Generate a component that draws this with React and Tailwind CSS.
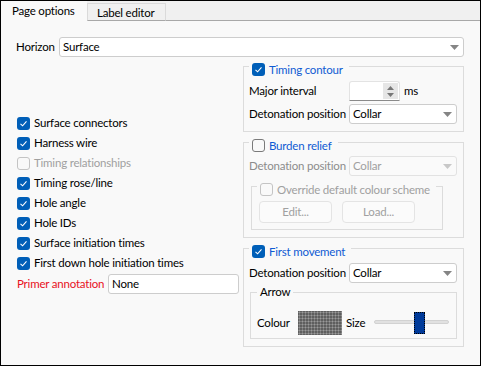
import React from "react";

function Check({ checked, disabled }) {
  if (checked) {
    return (
      <span className="w-[13px] h-[13px] shrink-0 rounded-[3px] bg-[#005fb8] flex items-center justify-center">
        <svg width="9" height="9" viewBox="0 0 9 9">
          <path d="M1.5 4.8 L3.6 6.8 L7.5 2.4" stroke="#ffffff" strokeWidth="1.1" fill="none" />
        </svg>
      </span>
    );
  }
  return (
    <span
      className={
        "w-[13px] h-[13px] shrink-0 rounded-[3px] border bg-[#f9f9f9] " +
        (disabled ? "border-[#c4c4c4]" : "border-[#7a7a7a]")
      }
    />
  );
}

function Tri({ disabled }) {
  return (
    <svg width="9" height="5" viewBox="0 0 9 5" className="shrink-0">
      <path d="M0 0 H9 L4.5 5 Z" fill={disabled ? "#c8c8c8" : "#858585"} />
    </svg>
  );
}

function Combo({ value, disabled, className }) {
  return (
    <div
      className={
        "h-[20px] rounded-[3px] border flex items-center justify-between pl-[3px] pr-[4px] " +
        (disabled
          ? "border-[#e2e2e2] bg-[#fafafa] text-[#a0a0a0] "
          : "border-[#cdcdcd] bg-white text-black ") +
        className
      }
    >
      <span>{value}</span>
      <Tri disabled={disabled} />
    </div>
  );
}

function CheckRow({ label, checked, disabled }) {
  return (
    <div className="h-[20px] flex items-center ml-[1px] gap-[4px]">
      <Check checked={checked} disabled={disabled} />
      <span className={disabled ? "text-[#a0a0a0]" : "text-black"}>{label}</span>
    </div>
  );
}

function Legend({ children, left }) {
  return (
    <div
      className={
        "absolute top-[-4px] h-[13px] flex items-center gap-[4px] pl-[3px] pr-[6px] bg-[#f9f9f9] " + left
      }
    >
      {children}
    </div>
  );
}

export default function App() {
  return (
    <div
      className="w-[481px] h-[366px] border border-black bg-[#f9f9f9] flex flex-col text-[11.5px] tracking-[-0.2px] leading-[16px] text-black overflow-hidden whitespace-nowrap"
      style={{ fontFamily: '"Segoe UI", Lato, "Noto Sans", sans-serif' }}
    >
      {/* tabs */}
      <div className="h-[20px] flex bg-[#f0f0f0] shrink-0">
        <div className="w-[86px] bg-[#f9f9f9] pl-[11px] pt-[2px]">Page options</div>
        <div className="mt-[2px] w-[79px] border border-[#dadada] border-b-[#a8a8a8] pl-[9px] pt-[1px]">
          Label editor
        </div>
        <div className="flex-1 border-b border-[#a8a8a8]" />
      </div>

      {/* panel */}
      <div className="flex-1 flex flex-col pl-[15px] pr-[16px]">
        <div className="mt-[16px] h-[20px] flex items-center">
          <span className="w-[43px] shrink-0">Horizon</span>
          <Combo value="Surface" className="flex-1" />
        </div>

        <div className="mt-[9px] flex">
          {/* left column */}
          <div className="w-[227px] shrink-0 pt-[47px] flex flex-col">
            <CheckRow label="Surface connectors" checked />
            <CheckRow label="Harness wire" checked />
            <CheckRow label="Timing relationships" disabled />
            <CheckRow label="Timing rose/line" checked />
            <CheckRow label="Hole angle" checked />
            <CheckRow label="Hole IDs" checked />
            <CheckRow label="Surface initiation times" checked />
            <CheckRow label="First down hole initiation times" checked />
            <div className="mt-[1px] h-[20px] flex items-center">
              <span className="ml-[1px] w-[91px] shrink-0 text-[#e81123]">Primer annotation</span>
              <div className="w-[131px] h-[20px] rounded-[3px] border border-[#cdcdcd] bg-white pl-[3px] flex items-center">
                None
              </div>
            </div>
          </div>

          {/* right column */}
          <div className="w-[221px] shrink-0 flex flex-col">
            {/* Timing contour */}
            <div className="relative h-[66px] border border-[#dcdcdc] pt-[14px] pl-[5px]">
              <Legend left="left-[5px]">
                <Check checked />
                <span className="text-[#0f5bd3]">Timing contour</span>
              </Legend>
              <div className="h-[20px] flex items-center">
                <span className="w-[100px] shrink-0">Major interval</span>
                <div className="relative w-[51px] h-[20px] bg-white border border-[#e3e3e3] border-b-[#8a8a8a] rounded-t-[3px]">
                  <div className="absolute right-[1px] top-[1px] w-[15px] h-[16px] bg-[#e6e6e6] flex flex-col items-center justify-center gap-[3px]">
                    <svg width="7" height="4" viewBox="0 0 7 4">
                      <path d="M0 4 L3.5 0 L7 4 Z" fill="#777" />
                    </svg>
                    <svg width="7" height="4" viewBox="0 0 7 4">
                      <path d="M0 0 L7 0 L3.5 4 Z" fill="#777" />
                    </svg>
                  </div>
                </div>
                <span className="ml-[4px]">ms</span>
              </div>
              <div className="mt-[3px] h-[20px] flex items-center">
                <span className="w-[100px] shrink-0">Detonation position</span>
                <Combo value="Collar" className="w-[108px]" />
              </div>
            </div>

            {/* Burden relief */}
            <div className="relative mt-[10px] h-[96px] border border-[#dcdcdc] pt-[13px]">
              <Legend left="left-[5px]">
                <Check />
                <span className="text-[#0f5bd3]">Burden relief</span>
              </Legend>
              <div className="h-[20px] flex items-center pl-[5px]">
                <span className="w-[100px] shrink-0 text-[#8c8c8c]">Detonation position</span>
                <Combo value="Collar" disabled className="w-[108px]" />
              </div>
              <div className="relative mt-[10px] ml-[7px] w-[192px] h-[44px] border border-[#dcdcdc] pt-[14px] pl-[7px] flex gap-[10px]">
                <Legend left="left-[5px]">
                  <Check disabled />
                  <span className="text-[#a0a0a0]">Override default colour scheme</span>
                </Legend>
                <div className="w-[73px] h-[22px] rounded-[4px] border border-[#e4e4e4] bg-[#fbfbfb] text-[#a0a0a0] flex items-center justify-center">
                  Edit...
                </div>
                <div className="w-[73px] h-[22px] rounded-[4px] border border-[#e4e4e4] bg-[#fbfbfb] text-[#a0a0a0] flex items-center justify-center">
                  Load...
                </div>
              </div>
            </div>

            {/* First movement */}
            <div className="relative mt-[10px] h-[99px] border border-[#dcdcdc] pt-[14px]">
              <Legend left="left-[5px]">
                <Check checked />
                <span className="text-[#0f5bd3]">First movement</span>
              </Legend>
              <div className="h-[20px] flex items-center pl-[5px]">
                <span className="w-[100px] shrink-0">Detonation position</span>
                <Combo value="Collar" className="w-[108px]" />
              </div>
              <div className="relative mt-[9px] ml-[6px] w-[207px] h-[47px] border border-[#dcdcdc] pt-[14px] pl-[6px] flex items-center">
                <div className="absolute top-[-8px] left-[6px] h-[14px] pl-[3px] pr-[3px] bg-[#f9f9f9] flex items-center">
                  Arrow
                </div>
                <span className="w-[41px] shrink-0">Colour</span>
                <div className="w-[44px] h-[24px] bg-[#5e5e5e] bg-[radial-gradient(circle,#9a9a9a_0.8px,transparent_1.2px)] bg-[length:3px_3px]" />
                <span className="ml-[4px] w-[28px] shrink-0">Size</span>
                <div className="relative w-[75px] h-[22px]">
                  <div className="absolute left-0 right-0 top-[8px] h-[4px] rounded-[2px] bg-[#e1e1e1] border border-[#d2d2d2]" />
                  <div className="absolute left-[40px] top-0 w-[11px] h-[22px] border border-dotted border-black bg-[#0b63d6] bg-[radial-gradient(circle,#003a99_0.7px,transparent_1px)] bg-[length:2px_2px]" />
                </div>
              </div>
            </div>
          </div>
        </div>
      </div>
    </div>
  );
}
